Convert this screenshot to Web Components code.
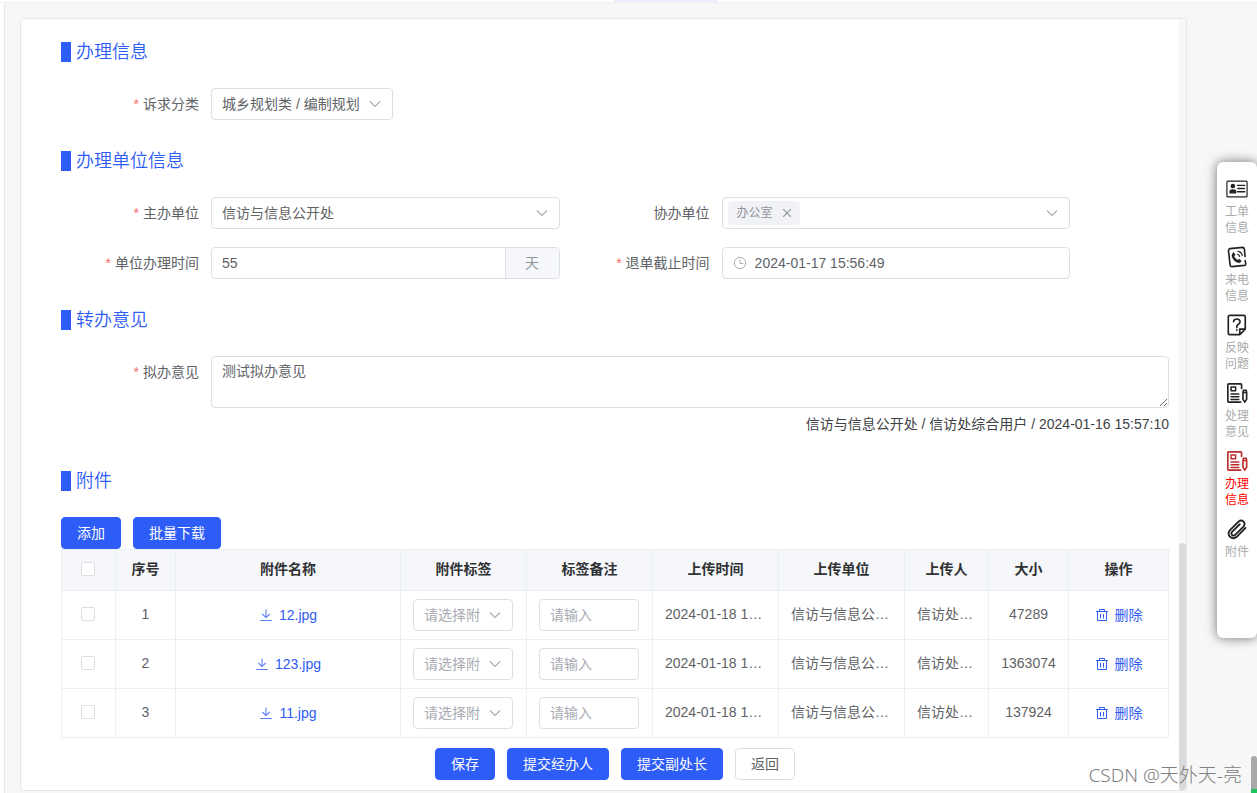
<!DOCTYPE html>
<html lang="zh-CN">
<head>
<meta charset="utf-8">
<title>办理信息</title>
<style>
  html, body { margin: 0; }
  body {
    --blue: #2e5cf6;
    --line: #dcdfe6;
    --soft: #ebeef5;
    --text: #606266;
    --muted: #a8abb2;
    --fill: #f5f7fa;
    min-height: 100vh;
    display: grid;
    background: #f7f7f7;
    color: var(--text);
    font: 14px/20px "Liberation Sans", "Noto Sans CJK SC", sans-serif;
  }
</style>
</head>
<body>
<work-page></work-page>

<script>
const RESET = `
  *, *::before, *::after { box-sizing: border-box; }
  input, select, textarea, button { font: inherit; color: inherit; margin: 0; }
  svg { display: block; flex: none; }
`;

const GLYPHS = {
  chevron: `<svg width="14" height="14" viewBox="0 0 14 14" fill="none" stroke="#a8abb2" stroke-width="1.1" aria-hidden="true"><path d="M2 4.5l5 5 5-5"/></svg>`,
  clock: `<svg width="14" height="14" viewBox="0 0 14 14" fill="none" stroke="#a8abb2" aria-hidden="true"><circle cx="7" cy="7" r="5.7"/><path d="M7 3.500v4h3.200"/></svg>`,
  close: `<svg width="14" height="14" viewBox="0 0 14 14" fill="none" stroke="#909399" stroke-width="1.1" aria-hidden="true"><path d="M3.2 3.2l7.6 7.6M10.8 3.2l-7.6 7.6"/></svg>`,
  download: `<svg width="14" height="14" viewBox="0 0 14 14" fill="none" stroke="#5b80f8" stroke-width="1.1" aria-hidden="true"><path d="M7 1.500v8M3.3 6L7 9.6 10.7 6M1.3 12.500h11.4"/></svg>`,
  trash: `<svg width="14" height="14" viewBox="0 0 14 14" fill="none" stroke="#2e5cf6" aria-hidden="true"><path d="M1 3.500h12M4.500 3.500v-2h5v2M2.500 3.500v9h9v-9M5.500 6v4.500M8.500 6v4.500"/></svg>`
};

class BaseElement extends HTMLElement {
  connectedCallback() {
    if (this.shadowRoot) return;
    this.attachShadow({ mode: 'open' }).innerHTML =
      `<style>${RESET}${this.css()}</style>${this.html()}`;
  }
}

class UiButton extends BaseElement {
  css() { return `
    :host { display: inline-flex; }
    button {
      height: 32px; padding: 0 15px; border: 1px solid var(--blue); border-radius: 4px;
      background: var(--blue); color: #fff; line-height: 20px; white-space: nowrap; cursor: pointer;
    }
    :host([plain]) button { background: #fff; border-color: var(--line); color: var(--text); }
  `; }
  html() { return `<button type="button"><slot></slot></button>`; }
}
customElements.define('ui-button', UiButton);

class SectionBlock extends BaseElement {
  css() { return `
    :host { display: block; }
    h2 {
      display: flex; align-items: center; gap: 5px; margin: 0 0 26px;
      font-size: 18px; line-height: 20px; font-weight: 350; color: var(--blue);
    }
    h2::before { content: ""; width: 10px; height: 20px; background: var(--blue); }
  `; }
  html() { return `<h2>${this.getAttribute('heading')}</h2><slot></slot>`; }
}
customElements.define('section-block', SectionBlock);

/* A label column with its control; each kind of field fills in control(). */
class FieldBase extends BaseElement {
  css() { return `
    :host { display: grid; grid-template-columns: 150px minmax(0, 1fr); }
    label { padding-right: 12px; text-align: right; line-height: 32px; }
    :host([required]) label::before { content: "*"; margin-right: 4px; color: #f56c6c; }
    .box {
      display: flex; align-items: center; min-height: 32px; overflow: hidden;
      background: #fff; border: 1px solid var(--line); border-radius: 4px;
    }
    input, select {
      appearance: none; flex: 1; min-width: 0; width: 100%; height: 30px; padding: 0 10px;
      border: 0; outline: 0; background: transparent;
    }
    ${this.extra ? this.extra() : ''}
  `; }
  html() {
    return `<label for="control">${this.getAttribute('label')}</label>${this.control()}`;
  }
}

class SelectField extends FieldBase {
  extra() { return `
    :host([compact]) .box { justify-self: start; }
    select, .box svg { grid-area: 1 / 1; }
    .box { display: grid; align-items: center; }
    .box svg { justify-self: end; margin-right: 10px; pointer-events: none; }
    select { padding-right: 32px; }
  `; }
  control() { return `<div class="box"><select id="control"><option>${this.getAttribute('value')}</option></select>${GLYPHS.chevron}</div>`; }
}
customElements.define('select-field', SelectField);

class TagField extends FieldBase {
  extra() { return `
    .box { padding: 0 10px 0 5px; }
    .tag {
      display: flex; align-items: center; gap: 7px; height: 24px; padding: 0 6px 0 9px;
      border-radius: 4px; background: #f0f2f5; color: #909399; font-size: 12px; white-space: nowrap;
    }
    button { padding: 0; border: 0; background: none; }
  `; }
  control() { return `<div class="box"><span class="tag">${this.getAttribute('value')}<button type="button" aria-label="移除">${GLYPHS.close}</button></span><input id="control" type="text">${GLYPHS.chevron}</div>`; }
}
customElements.define('tag-field', TagField);

class UnitField extends FieldBase {
  extra() { return `
    .unit {
      flex: none; width: 54px; border-left: 1px solid var(--line); background: var(--fill);
      color: #909399; line-height: 30px; text-align: center;
    }
  `; }
  control() { return `<div class="box"><input id="control" type="text" value="${this.getAttribute('value')}"><span class="unit">${this.getAttribute('unit')}</span></div>`; }
}
customElements.define('unit-field', UnitField);

class DateField extends FieldBase {
  extra() { return `
    .box { padding-left: 10px; }
    input { padding: 0 8px; }
  `; }
  control() { return `<div class="box">${GLYPHS.clock}<input id="control" type="text" value="${this.getAttribute('value')}"></div>`; }
}
customElements.define('date-field', DateField);

class OpinionField extends FieldBase {
  extra() { return `
    textarea {
      display: block; width: 100%; height: 52px; padding: 4px 10px; resize: vertical; line-height: 20px;
      border: 1px solid var(--line); border-radius: 4px; outline: 0; background: #fff;
    }
    .signature { margin: 0; line-height: 32px; text-align: right; color: #404246; }
  `; }
  control() { return `<div><textarea id="control">${this.getAttribute('value')}</textarea><p class="signature"><slot></slot></p></div>`; }
}
customElements.define('opinion-field', OpinionField);

class AttachmentTable extends BaseElement {
  css() { return `
    :host { display: block; }
    table {
      width: 100%; table-layout: fixed; border-collapse: separate; border-spacing: 0;
      border: solid var(--soft); border-width: 1px 0 0 1px; background: #fff;
    }
    th, td {
      padding: 0 12px 2px; border: solid var(--soft); border-width: 0 1px 1px 0;
      text-align: center; white-space: nowrap; overflow: hidden;
    }
    th { height: 41px; background: var(--fill); color: #303133; font-weight: 700; }
    td { height: 49px; }
    td.form { padding-bottom: 0; }
    td.cut { text-align: left; }
    .check { width: 54px; } .index { width: 60px; } .wide { width: 126px; }
    .person { width: 84px; } .size { width: 80px; } .action { width: 100px; }
    .size { padding: 0 8px 2px; }
    input[type=checkbox] {
      appearance: none; display: block; width: 14px; height: 14px; margin: 0 auto;
      border: 1px solid var(--line); border-radius: 2px; background: #fff;
    }
    .check, .pick { padding: 0 13px 2px 11px; }
    .link {
      display: inline-flex; align-items: center; gap: 6px; padding: 0; border: 0;
      background: none; color: var(--blue); text-decoration: none; vertical-align: middle;
    }
    .box {
      display: grid; align-items: center; width: 100px; height: 32px;
      border: 1px solid var(--line); border-radius: 4px;
    }
    .box > * { grid-area: 1 / 1; }
    .box svg { justify-self: end; margin-right: 10px; pointer-events: none; }
    .box select, .box input {
      appearance: none; width: 100%; height: 30px; padding: 0 10px; border: 0; outline: 0;
      background: transparent; color: var(--muted);
    }
    ::placeholder { color: var(--muted); opacity: 1; }
  `; }
  html() {
    const rows = [['1', '12.jpg', '47289'], ['2', '123.jpg', '1363074'], ['3', '11.jpg', '137924']];
    return `<table>
      <thead><tr>
        <th class="check"><input type="checkbox" aria-label="全选"></th>
        <th class="index">序号</th><th>附件名称</th><th class="wide">附件标签</th><th class="wide">标签备注</th>
        <th class="wide">上传时间</th><th class="wide">上传单位</th><th class="person">上传人</th>
        <th class="size">大小</th><th class="action">操作</th>
      </tr></thead>
      <tbody>${rows.map(([n, file, size]) => `<tr>
        <td class="pick"><input type="checkbox" aria-label="选择 ${file}"></td>
        <td>${n}</td>
        <td><a class="link" href="#${file}">${GLYPHS.download}${file}</a></td>
        <td class="form"><div class="box"><select aria-label="附件标签"><option>请选择附</option></select>${GLYPHS.chevron}</div></td>
        <td class="form"><div class="box"><input type="text" aria-label="标签备注" placeholder="请输入"></div></td>
        <td class="cut">2024-01-18 1…</td>
        <td class="cut">信访与信息公…</td>
        <td class="cut">信访处…</td>
        <td class="size">${size}</td>
        <td><button class="link" type="button">${GLYPHS.trash}删除</button></td>
      </tr>`).join('')}</tbody>
    </table>`;
  }
}
customElements.define('attachment-table', AttachmentTable);

const NOTE = `<path d="M17 7V3q0-1-1-1H3Q2 2 2 3v18q0 1 1 1h13"/><path d="M5.500 5.500h5v4h-5zM5.500 13h8.500M5.500 16h8.500M5.500 19h8.500" stroke-width="1.600"/><path d="M18.500 11.500h4V19l-2 3-2-3zM18.500 11.500l.5-2.500h3l.5 2.500"/>`;
const NAV_GLYPHS = {
  card: `<rect x="1" y="3.500" width="22" height="17" rx="1" stroke-width="1.300"/><g fill="currentColor" stroke="none"><circle cx="7.500" cy="8.800" r="2.500"/><path d="M3.800 17v-2.200q0-2.600 3.700-2.600t3.700 2.600V17z"/></g><path d="M12.500 8h8M13 11.500h7M12.500 15h8" stroke-width="1.500"/>`,
  phone: `<path d="M21 16l.5 3.500q0 1.500-1.500 1.700l-13.500 1.300q-1.700 0-2-1.700L2.700 5q0-1.800 1.700-2.100L18 1.500q1.700 0 2 1.700l.8 8.300"/><path d="M8.200 6.800l2 2.700-1.400 1.700q1 2.700 3.700 4.200l1.900-1.300 2.500 2.200q-1.200 2.300-3.400 2-5-1.200-7-6.500-.6-3.500 1.700-5z" fill="currentColor" stroke-width=".3"/><path d="M12.500 9q2 .3 2.300 2.300M13 5.800q4.300.6 4.800 4.800" stroke-width="1.300"/>`,
  question: `<path d="M15 22.500H4q-1.500 0-1.500-1.500V3Q2.500 1.500 4 1.500h15.500Q21 1.500 21 3v13.500l-6 6v-6h6"/><path d="M8.300 8.500q0-3 3.500-3t3.500 3q0 1.700-1.700 2.700t-1.800 2.300v1.300M11.800 17.200v.6" stroke-width="1.800"/>`,
  note: NOTE,
  clip: `<path d="M21.300 10.800l-9.600 9.700q-3.700 3.200-7.300 0-3.200-3.700 0-7.300l9.300-9.300q2.800-2.400 5.400 0 2.400 2.700 0 5.400l-9.200 9.200q-1.700 1.400-3.300 0-1.400-1.700 0-3.300l8.400-8.400" stroke-width="2"/>`
};

class NavItem extends BaseElement {
  css() { return `
    :host { display: block; color: #aaa; --ink: #222; }
    :host([active]) { color: #f00; --ink: #bd2c2c; }
    a {
      display: flex; flex-direction: column; align-items: center; gap: 4px;
      color: inherit; text-decoration: none; font-size: 12px; line-height: 16px;
    }
    svg { color: var(--ink); }
    span { width: 24px; word-break: break-all; }
  `; }
  html() { return `<a href="#${this.getAttribute('icon')}"><svg width="22" height="22" viewBox="0 0 24 24" fill="none" stroke="currentColor" stroke-width="1.8" stroke-linejoin="round" stroke-linecap="round" aria-hidden="true">${NAV_GLYPHS[this.getAttribute('icon')]}</svg><span><slot></slot></span></a>`; }
}
customElements.define('nav-item', NavItem);

class SideNav extends BaseElement {
  css() { return `
    :host { display: block; }
    nav {
      display: flex; flex-direction: column; gap: 10px; min-height: 60vh; padding: 16px 0;
      border-radius: 6px; background: #fff; box-shadow: 0 0 12px rgba(0, 0, 0, .55);
    }
  `; }
  html() { return `<nav aria-label="页内导航">
    <nav-item icon="card">工单信息</nav-item>
    <nav-item icon="phone">来电信息</nav-item>
    <nav-item icon="question">反映问题</nav-item>
    <nav-item icon="note">处理意见</nav-item>
    <nav-item icon="note" active>办理信息</nav-item>
    <nav-item icon="clip">附件</nav-item>
  </nav>`; }
}
customElements.define('side-nav', SideNav);

class ScrollCard extends BaseElement {
  css() { return `
    :host {
      display: grid; grid-template-columns: minmax(0, 1fr) 7px; overflow: hidden;
      border: 1px solid #e4e7ed; border-radius: 4px; background: #fff;
    }
    .content { padding: 23px 10px 10px 40px; }
    .track { display: flex; flex-direction: column; background: #f7f7f7; }
    .space { flex: 17; }
    .thumb { flex: 8; border-radius: 4px; background: #d8dadc; }
  `; }
  html() { return `<div class="content"><slot></slot></div><div class="track"><div class="space"></div><div class="thumb"></div></div>`; }
}
customElements.define('scroll-card', ScrollCard);

class WorkPage extends BaseElement {
  css() { return `
    :host {
      position: relative; display: grid; overflow: hidden;
      grid-template: 3px 1fr / 5px minmax(0, 1fr);
    }
    .top { grid-column: 1 / -1; display: flex; justify-content: center; background: #fff; border-bottom: 1px solid #efeff2; }
    .tab { width: 104px; margin-left: 75px; background: #ebeefe; }
    .rail { background: #fff; border-right: 1px solid #e4e7ed; }
    main { display: grid; grid-template-columns: minmax(0, 1fr) 40px; gap: 30px; padding: 15px 0 2px 15px; }
    side-nav { margin-top: 144px; }
    .sections { display: grid; gap: 31px; }
    .pair { display: grid; grid-template-columns: 45% 45%; gap: 18px 12px; }
    .buttons { display: flex; gap: 12px; }
    .footer { justify-content: center; margin-top: 10px; }
    .watermark { position: absolute; right: 15px; bottom: 6px; font: 300 19px/24px "Noto Sans", "Noto Sans CJK SC", sans-serif; color: #808080; }
    .bar { position: absolute; right: 0; bottom: 0; width: 6px; height: 37px; border-radius: 4px 4px 0 0; background: #a8a8a8; border-bottom: 4px solid #22c35e; }
  `; }
  html() { return `
    <div class="top"><div class="tab"></div></div>
    <div class="rail"></div>
    <main>
      <scroll-card>
        <div class="sections">
          <section-block heading="办理信息">
            <select-field compact required label="诉求分类" value="城乡规划类 / 编制规划"></select-field>
          </section-block>
          <section-block heading="办理单位信息">
            <div class="pair">
              <select-field required label="主办单位" value="信访与信息公开处"></select-field>
              <tag-field label="协办单位" value="办公室"></tag-field>
              <unit-field required label="单位办理时间" value="55" unit="天"></unit-field>
              <date-field required label="退单截止时间" value="2024-01-17 15:56:49"></date-field>
            </div>
          </section-block>
          <section-block heading="转办意见">
            <opinion-field required label="拟办意见" value="测试拟办意见">信访与信息公开处 / 信访处综合用户 / 2024-01-16 15:57:10</opinion-field>
          </section-block>
          <section-block heading="附件">
            <div class="buttons"><ui-button>添加</ui-button><ui-button>批量下载</ui-button></div>
            <attachment-table></attachment-table>
            <div class="buttons footer">
              <ui-button>保存</ui-button><ui-button>提交经办人</ui-button><ui-button>提交副处长</ui-button><ui-button plain>返回</ui-button>
            </div>
          </section-block>
        </div>
      </scroll-card>
      <side-nav></side-nav>
    </main>
    <div class="watermark">CSDN @天外天-亮</div>
    <div class="bar"></div>
  `; }
}
customElements.define('work-page', WorkPage);
</script>
</body>
</html>
